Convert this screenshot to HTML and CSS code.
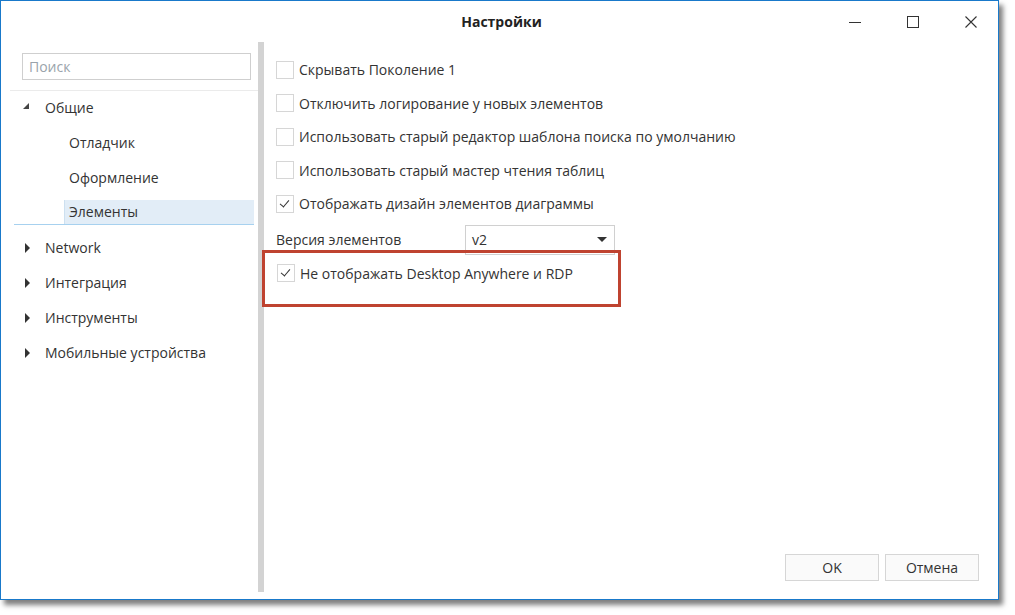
FILE: index.html
```html
<!DOCTYPE html>
<html lang="ru">
<head>
  <meta charset="UTF-8">
  <title>Настройки</title>
  <link rel="stylesheet" href="styles.css">
</head>
<body>
  <div class="window">
    <!-- Title bar -->
    <div class="titlebar">
      <div class="title">Настройки</div>
      <div class="caption-btns">
        <span class="cap-btn">
          <svg width="14" height="14" viewBox="0 0 14 14"><path d="M1 7.5h12" stroke="#333" stroke-width="1"/></svg>
        </span>
        <span class="cap-btn">
          <svg width="14" height="14" viewBox="0 0 14 14"><rect x="1.5" y="1.5" width="11" height="11" fill="none" stroke="#333" stroke-width="1"/></svg>
        </span>
        <span class="cap-btn">
          <svg width="14" height="14" viewBox="0 0 14 14"><path d="M1.5 1.5l11 11M12.5 1.5l-11 11" stroke="#333" stroke-width="1.1"/></svg>
        </span>
      </div>
    </div>

    <div class="content">
      <!-- Left tree -->
      <div class="sidebar">
        <div class="search-wrap">
          <input type="text" class="search" placeholder="Поиск">
        </div>
        <ul class="tree">
          <li class="node">
            <span class="arrow expanded"></span>Общие
          </li>
          <li class="node child">Отладчик</li>
          <li class="node child">Оформление</li>
          <li class="node child selected"><span class="sel-fill">Элементы</span></li>
          <li class="node"><span class="arrow"></span>Network</li>
          <li class="node"><span class="arrow"></span>Интеграция</li>
          <li class="node"><span class="arrow"></span>Инструменты</li>
          <li class="node"><span class="arrow"></span>Мобильные устройства</li>
        </ul>
      </div>

      <div class="splitter"></div>

      <!-- Settings panel -->
      <div class="panel">
        <div class="options">
          <label class="opt"><span class="box"></span>Скрывать Поколение 1</label>
          <label class="opt"><span class="box"></span>Отключить логирование у новых элементов</label>
          <label class="opt"><span class="box"></span>Использовать старый редактор шаблона поиска по умолчанию</label>
          <label class="opt"><span class="box"></span>Использовать старый мастер чтения таблиц</label>
          <label class="opt"><span class="box checked"></span>Отображать дизайн элементов диаграммы</label>
          <div class="field">
            <span class="field-label">Версия элементов</span>
            <div class="select">
              <span>v2</span>
              <span class="caret"></span>
            </div>
          </div>
          <div class="highlight">
            <label class="opt"><span class="box checked"></span>Не отображать Desktop Anywhere и RDP</label>
          </div>
        </div>
        <div class="actions">
          <button class="btn">OK</button>
          <button class="btn">Отмена</button>
        </div>
      </div>
    </div>
  </div>
</body>
</html>
```

FILE: styles.css
```css
/* Base */
* {
  box-sizing: border-box;
  margin: 0;
  padding: 0;
}
body {
  width: 1015px;
  height: 615px;
  background: #fff;
  font-family: "Open Sans", "Noto Sans", sans-serif;
  font-size: 14px;
  color: #333;
  overflow: hidden;
}
/* Window frame */
.window {
  width: 999px;
  height: 600px;
  border: 1px solid #1979ca;
  background: #fff;
  box-shadow: 4px 5px 5px rgba(0, 0, 0, 0.5);
  display: flex;
  flex-direction: column;
}
.titlebar {
  height: 41px;
  position: relative;
  display: flex;
  align-items: center;
  justify-content: center;
}
.title {
  font-weight: bold;
  font-size: 14px;
  color: #222;
  margin-left: 4px;
}
.caption-btns {
  position: absolute;
  right: 20px;
  top: 14px;
  display: flex;
  gap: 44px;
}
.cap-btn {
  width: 14px;
  height: 14px;
  display: block;
}
.cap-btn svg {
  display: block;
}
.content {
  flex: 1;
  display: flex;
  min-height: 0;
  padding-bottom: 7px;
}
/* Sidebar */
.sidebar {
  width: 257px;
  padding-left: 9px;
}
.search-wrap {
  padding: 11px 7px 10px 12px;
  border-bottom: 1px solid #ebebeb;
}
.search {
  width: 229px;
  height: 27px;
  border: 1px solid #cfcfcf;
  padding: 0 6px;
  font-family: inherit;
  font-size: 14px;
  color: #333;
  outline: none;
}
.search::placeholder {
  color: #9aa3ab;
}
.tree {
  list-style: none;
  padding-top: 4px;
}
.node {
  height: 25px;
  line-height: 25px;
  margin-bottom: 10px;
  padding-left: 35px;
  position: relative;
  white-space: nowrap;
}
.node.child {
  padding-left: 59px;
}
.arrow {
  position: absolute;
  left: 15px;
  top: 8px;
  width: 0;
  height: 0;
  border-top: 5px solid transparent;
  border-bottom: 5px solid transparent;
  border-left: 5px solid #333;
}
.arrow.expanded {
  left: 13px;
  top: 8px;
  border-top: 0;
  border-left: 6px solid transparent;
  border-bottom: 6px solid #444;
}
.node.selected {
  margin-left: 4px;
  padding-left: 50px;
  border-bottom: 1px solid #a7d1ef;
  width: 240px;
  height: 25px;
  line-height: 24px;
}
.sel-fill {
  display: block;
  height: 24px;
  background: #e2edf7;
  border-left: 1px solid #cde0f0;
  padding-left: 4px;
}
/* Splitter */
.splitter {
  width: 6px;
  background: #d3d3d3;
}
/* Right panel */
.panel {
  flex: 1;
  display: flex;
  flex-direction: column;
  justify-content: space-between;
  padding: 17px 19px 11px 12px;
}
.options {
  display: flex;
  flex-direction: column;
}
.opt {
  display: flex;
  align-items: center;
  height: 21px;
  margin-bottom: 12.5px;
  white-space: nowrap;
}
.box {
  width: 18px;
  height: 18px;
  border: 1px solid #d6d6d6;
  background: #fff;
  margin-right: 5px;
  position: relative;
  flex-shrink: 0;
}
.box.checked::after {
  content: "";
  position: absolute;
  left: 5px;
  top: 2px;
  width: 4px;
  height: 8px;
  border-right: 1.5px solid #333;
  border-bottom: 1.5px solid #333;
  transform: rotate(40deg);
}
.field {
  display: flex;
  align-items: center;
  height: 30px;
  margin-top: -2px;
}
.field-label {
  width: 189px;
}
.select {
  width: 150px;
  height: 30px;
  border: 1px solid #d0d0d0;
  display: flex;
  align-items: center;
  justify-content: space-between;
  padding: 0 7px 0 6px;
}
.caret {
  width: 0;
  height: 0;
  border-left: 5px solid transparent;
  border-right: 5px solid transparent;
  border-top: 5px solid #333;
}
/* Annotation box */
.highlight {
  position: relative;
  margin: -5px 0 0 -14px;
  width: 359px;
  height: 57px;
  border: 3px solid #bf4330;
  padding: 10px 0 0 12px;
}
.highlight .opt {
  margin-bottom: 0;
}
/* Buttons */
.actions {
  display: flex;
  justify-content: flex-end;
  gap: 6px;
}
.btn {
  width: 94px;
  height: 27px;
  border: 1px solid #d6d6d6;
  background: #fafafa;
  font-family: inherit;
  font-size: 14px;
  color: #333;
}
```
